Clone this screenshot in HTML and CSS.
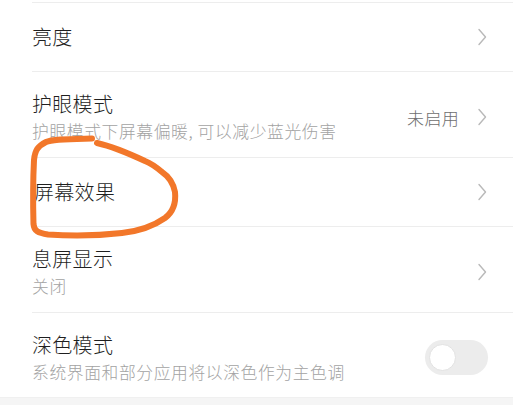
FILE: index.html
```html
<!DOCTYPE html>
<html lang="zh-CN">
<head>
<meta charset="utf-8">
<link rel="stylesheet" href="styles.css">
</head>
<body>
<div class="page">
  <div class="list">
    <div class="row single r1">
      <div class="texts"><div class="title">亮度</div></div>
      <div class="right">
        <svg class="chev" viewBox="0 0 10 18" width="10" height="18"><path d="M2 1.5 L8.5 9 L2 16.5" fill="none" stroke="#b9b9b9" stroke-width="1.4" stroke-linecap="round" stroke-linejoin="round"/></svg>
      </div>
    </div>
    <div class="row two r2">
      <div class="texts">
        <div class="title">护眼模式</div>
        <div class="sub">护眼模式下屏幕偏暖, 可以减少蓝光伤害</div>
      </div>
      <div class="right">
        <span class="value">未启用</span>
        <svg class="chev" viewBox="0 0 10 18" width="10" height="18"><path d="M2 1.5 L8.5 9 L2 16.5" fill="none" stroke="#b9b9b9" stroke-width="1.4" stroke-linecap="round" stroke-linejoin="round"/></svg>
      </div>
    </div>
    <div class="row single r3">
      <div class="texts"><div class="title t3">屏幕效果</div></div>
      <div class="right">
        <svg class="chev" viewBox="0 0 10 18" width="10" height="18"><path d="M2 1.5 L8.5 9 L2 16.5" fill="none" stroke="#b9b9b9" stroke-width="1.4" stroke-linecap="round" stroke-linejoin="round"/></svg>
      </div>
    </div>
    <div class="row two r4">
      <div class="texts">
        <div class="title">息屏显示</div>
        <div class="sub">关闭</div>
      </div>
      <div class="right">
        <svg class="chev" viewBox="0 0 10 18" width="10" height="18"><path d="M2 1.5 L8.5 9 L2 16.5" fill="none" stroke="#b9b9b9" stroke-width="1.4" stroke-linecap="round" stroke-linejoin="round"/></svg>
      </div>
    </div>
    <div class="row two r5">
      <div class="texts">
        <div class="title">深色模式</div>
        <div class="sub">系统界面和部分应用将以深色作为主色调</div>
      </div>
      <div class="right toggle-wrap">
        <div class="toggle"><div class="knob"></div></div>
      </div>
    </div>
  </div>
  <div class="band"></div>
  <svg class="scribble" width="513" height="405" viewBox="0 0 513 405">
    <path d="M92,138.5 C70,139 52,139 46,142 C38,146 35,150 34,160 C33,180 33,205 33.5,224 C34,231 38,233 48,234.5 C70,236 100,235.5 122,233 C140,231 155,225 165,218 C173,212 176,202 175,192 C173,182 168,176 162,172 C155,166 150,163 145,161 C130,154 115,147 97,143" fill="none" stroke="#f2772a" stroke-width="6" stroke-linecap="round" stroke-linejoin="round"/>
  </svg>
</div>
</body>
</html>
```

FILE: styles.css
```css
html, body {
  margin: 0;
  padding: 0;
  background: #ffffff;
}
body {
  font-family: "Noto Sans CJK SC", "Noto Sans", sans-serif;
  width: 513px;
  height: 405px;
  overflow: hidden;
}
.page {
  position: relative;
  width: 513px;
  height: 405px;
  display: flex;
  flex-direction: column;
}
.list {
  padding-top: 2px;
  padding-left: 32px;
}
.row {
  display: flex;
  align-items: center;
  justify-content: space-between;
  border-top: 1px solid #ededed;
  padding-right: 26px;
  box-sizing: border-box;
}
.row.single {
  height: 69px;
}
.row.two {
  height: 86px;
  padding-top: 18px;
  padding-bottom: 13px;
}
.row.r5 {
  height: 84px;
  padding-top: 18px;
  padding-bottom: 12px;
}
.texts {
  display: flex;
  flex-direction: column;
}
.title {
  font-size: 20px;
  line-height: 28px;
  font-weight: 300;
  color: #1f1f1f;
  letter-spacing: 0.3px;
}
.t3 {
  margin-left: 2px;
}
.sub {
  font-size: 16.8px;
  line-height: 26px;
  font-weight: 300;
  color: #a3a3a3;
  letter-spacing: 0.6px;
}
.right {
  display: flex;
  align-items: center;
  gap: 18px;
}
.value {
  font-size: 17px;
  font-weight: 300;
  color: #6e6e6e;
  letter-spacing: 0.3px;
}
.chev {
  display: block;
}
.toggle-wrap {
  margin-right: -1px;
}
.toggle {
  width: 63px;
  height: 35px;
  border-radius: 18px;
  background: #ececec;
  box-sizing: border-box;
  padding: 4px;
  display: flex;
  align-items: center;
}
.knob {
  width: 27px;
  height: 27px;
  border-radius: 50%;
  background: #ffffff;
  box-sizing: border-box;
  border: 1px solid #e2e2e2;
}
.band {
  margin-top: 1px;
  flex: 1;
  background: #f5f5f5;
  border-top: 1px solid #f0f0f0;
}
.scribble {
  position: absolute;
  left: 0;
  top: 0;
  pointer-events: none;
}
```
